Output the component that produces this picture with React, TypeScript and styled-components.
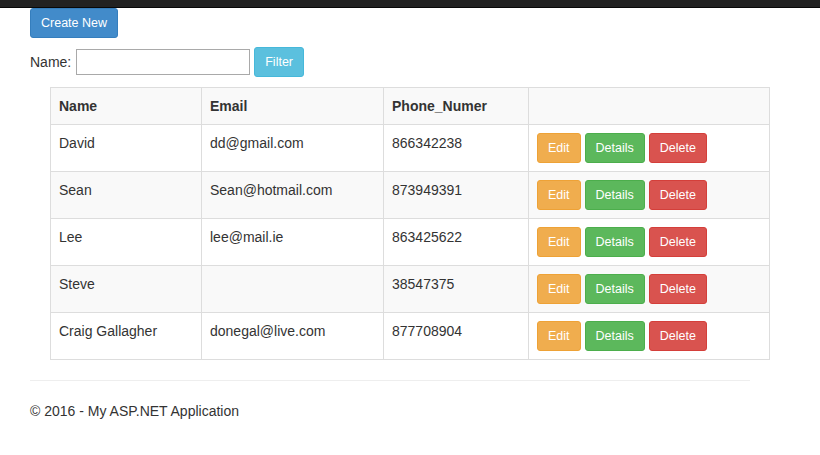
import React from "react";
import styled, { createGlobalStyle, css } from "styled-components";

const Global = createGlobalStyle`
  html, body { margin: 0; padding: 0; background: #fff; }
  body {
    font-family: "Liberation Sans", Arial, sans-serif;
    font-size: 14px;
    line-height: 20px;
    color: #333;
  }
  * { box-sizing: border-box; }
`;

const Navbar = styled.div`
  height: 8px;
  background: #222;
  border-bottom: 1px solid #080808;
`;

const Container = styled.div`
  padding: 0 30px;
  width: 780px;
`;

type Variant = "primary" | "info" | "warning" | "success" | "danger";

const palette: Record<Variant, { bg: string; border: string }> = {
  primary: { bg: "#428bca", border: "#357ebd" },
  info: { bg: "#5bc0de", border: "#46b8da" },
  warning: { bg: "#f0ad4e", border: "#eea236" },
  success: { bg: "#5cb85c", border: "#4cae4c" },
  danger: { bg: "#d9534f", border: "#d43f3a" },
};

const Button = styled.button<{ $variant: Variant }>`
  display: inline-block;
  height: 30px;
  padding: 5px 10px;
  font-family: "Liberation Sans", Arial, sans-serif;
  font-size: 12.5px;
  line-height: 18px;
  color: #fff;
  border-radius: 3px;
  cursor: pointer;
  ${({ $variant }) => css`
    background: ${palette[$variant].bg};
    border: 1px solid ${palette[$variant].border};
  `}
`;

const TopBar = styled.div`
  display: flex;
  height: 29px;
`;

const FilterForm = styled.form`
  display: flex;
  align-items: center;
  margin-top: 10px;
  height: 30px;
`;

const Label = styled.label`
  margin-right: 5px;
`;

const TextInput = styled.input`
  width: 174px;
  height: 26px;
  border: 1px solid #a9a9a9;
  padding: 1px 3px;
  font-family: "Liberation Sans", Arial, sans-serif;
  font-size: 13px;
  margin-right: 4px;
`;

const Table = styled.table`
  margin: 10px 0 0 20px;
  width: 720px;
  border-collapse: collapse;
  table-layout: fixed;
  border: 1px solid #ddd;
`;

const Row = styled.tr`
  &:nth-child(odd) { background: #f9f9f9; }
`;

const Th = styled.th<{ $w?: number }>`
  ${({ $w }) => ($w ? `width: ${$w}px;` : "")}
  text-align: left;
  font-weight: bold;
  padding: 8px;
  line-height: 20px;
  border: 1px solid #ddd;
  vertical-align: bottom;
`;

const Td = styled.td`
  padding: 8px;
  line-height: 20px;
  border: 1px solid #ddd;
  vertical-align: top;
  height: 47px;
`;

const Actions = styled.div`
  display: flex;
  gap: 4px;
`;

const Rule = styled.hr`
  margin: 20px 0 0;
  border: 0;
  border-top: 1px solid #eee;
  width: 720px;
`;

const Footer = styled.footer`
  margin-top: 20px;
  line-height: 20px;
`;

const people = [
  { name: "David", email: "dd@gmail.com", phone: "866342238" },
  { name: "Sean", email: "Sean@hotmail.com", phone: "873949391" },
  { name: "Lee", email: "lee@mail.ie", phone: "863425622" },
  { name: "Steve", email: "", phone: "38547375" },
  { name: "Craig Gallagher", email: "donegal@live.com", phone: "877708904" },
];

export default function App() {
  return (
    <>
      <Global />
      <Navbar />
      <Container>
        <TopBar>
          <Button $variant="primary">Create New</Button>
        </TopBar>
        <FilterForm onSubmit={(e) => e.preventDefault()}>
          <Label>Name:</Label>
          <TextInput type="text" />
          <Button $variant="info" type="submit">Filter</Button>
        </FilterForm>
        <Table>
          <tbody>
            <Row>
              <Th $w={151}>Name</Th>
              <Th $w={182}>Email</Th>
              <Th $w={145}>Phone_Numer</Th>
              <Th></Th>
            </Row>
            {people.map((p) => (
              <Row key={p.name}>
                <Td>{p.name}</Td>
                <Td>{p.email}</Td>
                <Td>{p.phone}</Td>
                <Td>
                  <Actions>
                    <Button $variant="warning">Edit</Button>
                    <Button $variant="success">Details</Button>
                    <Button $variant="danger">Delete</Button>
                  </Actions>
                </Td>
              </Row>
            ))}
          </tbody>
        </Table>
        <Rule />
        <Footer>© 2016 - My ASP.NET Application</Footer>
      </Container>
    </>
  );
}
